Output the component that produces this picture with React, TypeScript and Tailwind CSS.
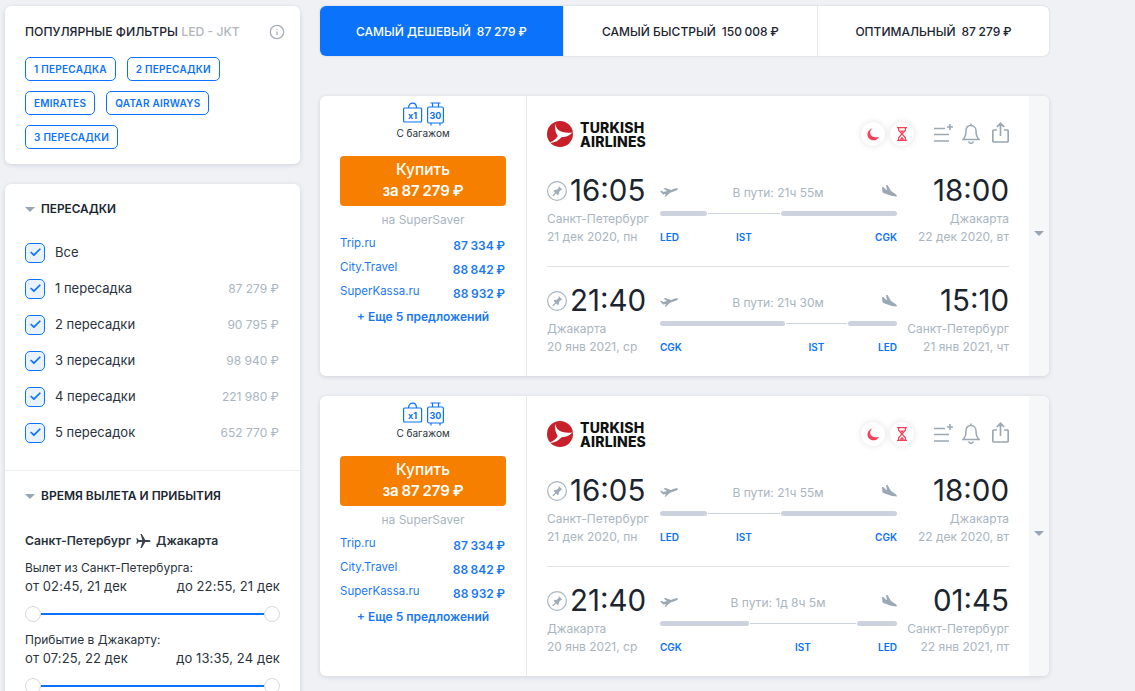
import { Check, Info } from 'lucide-react'

const font = { fontFamily: 'Inter, "Noto Sans", sans-serif' }

const Caret = () => <span className="inline-block w-0 h-0 border-x-[5px] border-x-transparent border-t-[5px] border-t-[#98a5b3]" />

const Pin = () => (
    <svg width="20" height="20" viewBox="0 0 20 20" fill="none" className="shrink-0 mt-[2px]">
        <circle cx="10" cy="10" r="9.400" stroke="#a9b5c0" strokeWidth="1.200" />
        <path d="M11.500 4.800l3.700 3.700-1.200.4-2 2-.2 2.400-1 .9-1.700-1.700-2.700 2.700-.9-.1.1-.8 2.600-2.700-1.700-1.700.9-1 2.400-.2 2-2z" fill="#a0adb9" />
    </svg>
)

const TakeOff = () => (
    <svg width="18" height="11" viewBox="0 0 18 11" fill="#9aa8b4">
        <path d="M0 4L1.500 3.800L3.500 5L7 4L3.500 1.500L5.500 1L11 3L15 1.600C16.500 1.200 18 1.200 18 1.900C18 2.600 16.500 3.400 15 3.900L10 5.800L6 9.500L4.500 10L6 7L3 7.600Z" />
    </svg>
)

const Landing = () => (
    <svg width="16" height="14" viewBox="0 0 16 12" preserveAspectRatio="none" fill="#9aa8b4" className="-mt-[3px]">
        <path d="M1 2.500L2.300 2.500L5 5L6 5.300L5 .8L6.500 .8L10 6L14.500 8.600C15.500 9.200 16 10 15.800 10.800L11 10.200L3 8L1.500 7Z" />
    </svg>
)

const Bag = () => (
    <svg width="41" height="24" viewBox="0 0 41 24" fill="none" stroke="#0b72fb" strokeWidth="1.200">
        <rect x="0.600" y="6" width="18" height="14" rx="1" />
        <path d="M5.500 6c0-6.500 8-6.500 8 0" />
        <text x="9.500" y="16.800" textAnchor="middle" fontSize="9" fontWeight="700" fill="#0b72fb" stroke="none">x1</text>
        <rect x="24.600" y="5" width="15.800" height="16" rx="1.500" />
        <path d="M27.500 1h10M29.500 1v4M35.500 1v4M28 21v2.500M37 21v2.500" />
        <text x="32.500" y="16.500" textAnchor="middle" fontSize="9" fontWeight="700" fill="#0b72fb" stroke="none">30</text>
    </svg>
)

const Logo = () => (
    <div className="flex items-center gap-[7px]">
        <svg width="26" height="26" viewBox="0 0 26 26">
            <circle cx="13" cy="13" r="13" fill="#c8202a" />
            <path d="M8 2.500C9.500 9 13 12.500 25.500 11.500C22 15 18 16.500 15 16C11 20 6.500 22.500 2.500 21.500C6 20.500 9 18 10.700 15C8.500 11.500 7.500 7 8 2.500Z" fill="#fff" />
        </svg>
        <div className="text-[14px] leading-[14px] font-extrabold text-[#111] tracking-[0.2px] pt-[2px]">
            <div>TURKISH</div>
            <div>AIRLINES</div>
        </div>
    </div>
)

const ListAdd = () => (
    <svg width="20" height="18" viewBox="0 0 20 18" fill="none" stroke="#9aa8b4" strokeWidth="1.600" className="-mt-[2px]">
        <path d="M0 4.500h11M0 10.500h15M0 17h15M13 3h6M16 0v6" />
    </svg>
)

const BellIcon = () => (
    <svg width="18" height="21" viewBox="0 0 18 21" fill="none" stroke="#9aa8b4" strokeWidth="1.500" className="-mt-[1px]">
        <path d="M9 .6v2M9 2.600c-3.200 0-5 2.400-5 5.400 0 4-1 6.500-3 8.500h16c-2-2-3-4.500-3-8.500 0-3-1.800-5.400-5-5.400zM6.500 18.500c.5 1.200 1.400 1.800 2.500 1.800s2-.6 2.500-1.800" />
    </svg>
)

const Share = () => (
    <svg width="17" height="21" viewBox="0 0 17 21" fill="none" stroke="#9aa8b4" strokeWidth="1.700" className="-mt-[3px]">
        <path d="M5 8H2a1.200 1.200 0 0 0-1.200 1.200v9.600A1.200 1.200 0 0 0 2 20h13a1.200 1.200 0 0 0 1.200-1.200V9.200A1.200 1.200 0 0 0 15 8h-3M8.500 14V1.500M4.800 5l3.700-3.700L12.200 5" />
    </svg>
)

const Moon = () => (
    <svg width="13" height="13" viewBox="0 0 14 14"><path d="M6 .500C3 2 2.500 7 5.500 9c2 1.300 5 1.300 7.500.4C11.500 12.300 9 13.500 6.800 13.300 3.200 13 .500 10.300.500 6.900.500 4 2.800 1.200 6 .500z" fill="#f5405a" /></svg>
)

const Hourglass = () => (
    <svg width="10" height="14" viewBox="0 0 10 14" fill="none" stroke="#f5405a" strokeWidth="1.200">
        <path d="M0 .600h10M0 13.400h10M1.600.6v2.600L5 7 1.600 10.800v2.600M8.400.6v2.600L5 7l3.400 3.800v2.600" />
        <path d="M2.500 12.800L5 9.800l2.500 3zM3 3.500h4L5 6z" fill="#f5405a" stroke="none" />
    </svg>
)

const Round = ({ children }: { children: React.ReactNode }) => (
    <div className="w-6 h-6 rounded-full bg-white shadow-[0_0_6px_rgba(0,0,0,0.12)] flex items-center justify-center">{children}</div>
)

type Leg = {
    dep: string; arr: string; fromCity: string; toCity: string
    fromDate: string; toDate: string; duration: string; a: number; b: number; codes: string[]
}

const LegRow = ({ leg }: { leg: Leg }) => (
    <div className="flex h-[87px]">
        <div className="w-[113px] shrink-0">
            <div className="flex items-center gap-[3px] h-[38px]">
                <Pin />
                <span className="text-[29.500px] text-[#1b2530]">{leg.dep}</span>
            </div>
            <div className="text-xs leading-[18px] text-[#a9b5c0] mt-px whitespace-nowrap">{leg.fromCity}</div>
            <div className="text-xs leading-[18px] text-[#a9b5c0] whitespace-nowrap">{leg.fromDate}</div>
        </div>
        <div className="w-[237px] shrink-0">
            <div className="flex items-center justify-between h-[37px] pt-[6px]">
                <TakeOff />
                <span className="text-xs text-[#a9b5c0] mr-[3px]">{leg.duration}</span>
                <Landing />
            </div>
            <div className="flex items-center h-[5px] mt-[3px]">
                <div className="h-[5px] rounded-full bg-[#ccd3df]" style={{ width: leg.a }} />
                <div className="h-px flex-1 bg-[#ccd3df] mx-px" />
                <div className="h-[5px] rounded-full bg-[#ccd3df]" style={{ width: leg.b }} />
            </div>
            <div className="flex text-[10px] font-semibold text-[#0b72fb] mt-[15px] leading-3">
                <div style={{ width: leg.a }}>{leg.codes[0]}</div>
                <div className="flex-1 text-center">{leg.codes[1]}</div>
                <div className="text-right" style={{ width: leg.b }}>{leg.codes[2]}</div>
            </div>
        </div>
        <div className="flex-1 text-right">
            <div className="text-[29.500px] text-[#1b2530] h-[38px] leading-[38px]">{leg.arr}</div>
            <div className="text-xs leading-[18px] text-[#a9b5c0] mt-px whitespace-nowrap">{leg.toCity}</div>
            <div className="text-xs leading-[18px] text-[#a9b5c0] whitespace-nowrap">{leg.toDate}</div>
        </div>
    </div>
)

const Offer = ({ name, price }: { name: string; price: string }) => (
    <div className="flex justify-between h-6 items-center">
        <span className="text-[11.500px] -mt-[2px]">{name}</span>
        <span className="font-semibold mt-[2px] mr-px [word-spacing:-0.5px]">{price}</span>
    </div>
)

const Ticket = ({ legs }: { legs: Leg[] }) => (
    <div className="flex h-[280px] bg-white rounded-md shadow-[0_1px_4px_rgba(90,105,125,0.22)] overflow-hidden">
        <div className="w-[207px] shrink-0 border-r border-[#e6e9ee] px-5 flex flex-col">
            <div className="flex justify-center mt-[6px]"><Bag /></div>
            <div className="text-[10px] leading-3 text-[#2a333d] text-center mt-px">С багажом</div>
            <div className="h-[50px] mt-[17px] pb-[2px] rounded bg-[#f77f00] text-white text-center text-[15px] font-medium leading-[21px] flex flex-col justify-center">
                <div className="text-[15.500px]">Купить</div>
                <div className="font-semibold [word-spacing:-1px]">за 87 279 ₽</div>
            </div>
            <div className="text-xs leading-4 text-[#a9b5c0] text-center mt-[6px]">на SuperSaver</div>
            <div className="text-xs text-[#1a78f2] mt-[5px]">
                <Offer name="Trip.ru" price="87 334 ₽" />
                <Offer name="City.Travel" price="88 842 ₽" />
                <Offer name="SuperKassa.ru" price="88 932 ₽" />
            </div>
            <div className="text-xs font-semibold text-[#1a78f2] text-center mt-[4px] leading-4">+ Еще 5 предложений</div>
        </div>
        <div className="flex-1 px-5">
            <div className="flex items-center justify-between mt-[24px] h-[28px]">
                <Logo />
                <div className="flex items-center">
                    <div className="flex gap-[5px] mr-[20px]"><Round><Moon /></Round><Round><Hourglass /></Round></div>
                    <ListAdd />
                    <div className="ml-[8px] flex"><BellIcon /></div>
                    <div className="ml-[12px] flex"><Share /></div>
                </div>
            </div>
            <div className="mt-[23px]">
                <LegRow leg={legs[0]} />
                <div className="h-px bg-[#dfe3e8] mt-[8px] mb-[14px]" />
                <LegRow leg={legs[1]} />
            </div>
        </div>
        <div className="w-5 shrink-0 bg-[#f6f7f9] flex items-center justify-center pb-[6px]"><Caret /></div>
    </div>
)

const Tab = ({ title, price, active, width }: { title: string; price: string; active?: boolean; width: string }) => (
    <div className={`${width} pt-[1px] flex items-center justify-center gap-[6px] text-xs font-medium ${active ? 'bg-[#0b72fb] text-white' : 'text-[#1b2530] border-l border-[#e6e9ee]'}`}>
        <span>{title}</span><span className="[word-spacing:-0.5px]">{price}</span>
    </div>
)

const Chip = ({ label }: { label: string }) => (
    <span className="h-6 px-2 inline-flex items-center border border-[#0b72fb] rounded-[5px] text-[10px] font-semibold tracking-[0.25px] text-[#0b72fb]">{label}</span>
)

const Stop = ({ label, price }: { label: string; price?: string }) => (
    <div className="flex items-center h-9">
        <div className="w-5 h-5 rounded-[5px] border-[1.500px] border-[#0b72fb] bg-[#e9f3ff] flex items-center justify-center">
            <Check size={13} strokeWidth={3.200} className="text-[#0b72fb]" />
        </div>
        <span className="ml-[10px] text-[13px] text-[#2a333d]">{label}</span>
        {price && <span className="ml-auto mr-px text-xs text-[#a9b5c0]">{price}</span>}
    </div>
)

const Range = () => (
    <div className="flex items-center h-4 mt-[11px]">
        <div className="w-4 h-4 rounded-full bg-white border border-[#d5d9de] shrink-0" />
        <div className="flex-1 h-0.5 bg-[#0b72fb]" />
        <div className="w-4 h-4 rounded-full bg-white border border-[#d5d9de] shrink-0" />
    </div>
)

const first: Leg = { dep: '16:05', arr: '18:00', fromCity: 'Санкт-Петербург', toCity: 'Джакарта', fromDate: '21 дек 2020, пн', toDate: '22 дек 2020, вт', duration: 'В пути: 21ч 55м', a: 47, b: 116, codes: ['LED', 'IST', 'CGK'] }
const back1: Leg = { dep: '21:40', arr: '15:10', fromCity: 'Джакарта', toCity: 'Санкт-Петербург', fromDate: '20 янв 2021, ср', toDate: '21 янв 2021, чт', duration: 'В пути: 21ч 30м', a: 125, b: 49, codes: ['CGK', 'IST', 'LED'] }
const back2: Leg = { dep: '21:40', arr: '01:45', fromCity: 'Джакарта', toCity: 'Санкт-Петербург', fromDate: '20 янв 2021, ср', toDate: '22 янв 2021, пт', duration: 'В пути: 1д 8ч 5м', a: 89, b: 40, codes: ['CGK', 'IST', 'LED'] }

export default function App() {
    return (
        <div className="h-[691px] overflow-hidden bg-[#eff1f5] flex items-start" style={font}>
            <aside className="w-[295px] ml-[5px] mt-[6px] shrink-0">
                <div className="h-[158px] bg-white rounded-md shadow-[0_1px_4px_rgba(90,105,125,0.22)] pl-5 pr-[15px] pt-[17px]">
                    <div className="flex items-center justify-between text-[12.200px] font-medium text-[#1b2530] whitespace-nowrap">
                        <div>ПОПУЛЯРНЫЕ ФИЛЬТРЫ <span className="text-[#b0b6bc]">LED - JKT</span></div>
                        <Info size={16} className="text-[#a4afba]" />
                    </div>
                    <div className="flex flex-wrap gap-x-[11px] gap-y-[10px] mt-[16px]">
                        <Chip label="1 ПЕРЕСАДКА" />
                        <Chip label="2 ПЕРЕСАДКИ" />
                        <Chip label="EMIRATES" />
                        <Chip label="QATAR AIRWAYS" />
                        <Chip label="3 ПЕРЕСАДКИ" />
                    </div>
                </div>
                <div className="mt-5 h-[600px] bg-white rounded-md shadow-[0_1px_4px_rgba(90,105,125,0.22)]">
                    <div className="px-5 pt-[17px] h-[287px] border-b border-[#eceef2]">
                        <div className="flex items-center gap-[6px] text-[11.800px] font-semibold text-[#1b2530]"><Caret />ПЕРЕСАДКИ</div>
                        <div className="mt-[16px]">
                            <Stop label="Все" />
                            <Stop label="1 пересадка" price="87 279 ₽" />
                            <Stop label="2 пересадки" price="90 795 ₽" />
                            <Stop label="3 пересадки" price="98 940 ₽" />
                            <Stop label="4 пересадки" price="221 980 ₽" />
                            <Stop label="5 пересадок" price="652 770 ₽" />
                        </div>
                    </div>
                    <div className="px-5 pt-[17px]">
                        <div className="flex items-center gap-[6px] text-xs font-semibold text-[#1b2530]"><Caret />ВРЕМЯ ВЫЛЕТА И ПРИБЫТИЯ</div>
                        <div className="flex items-center gap-[5px] text-[12.200px] font-semibold text-[#2a333d] mt-[28px]">
                            Санкт-Петербург
                            <svg width="15" height="14" viewBox="0 0 15 14" fill="#3a444f"><path d="M14.500 7c0-.700-1-1.100-2-1.100H9.300L5.800 0H4.500L6.300 5.900H2.700L1.300 4.200H.300L1 7 .300 9.800h1l1.400-1.700h3.600L4.500 14h1.300l3.500-5.900h3.200c1 0 2-.4 2-1.100z" /></svg>
                            Джакарта
                        </div>
                        <div className="text-xs leading-[18px] text-[#2a333d] mt-[9px]">Вылет из Санкт-Петербурга:</div>
                        <div className="flex justify-between text-[13px] leading-[18px] tracking-[0.1px] text-[#2a333d]"><span>от 02:45, 21 дек</span><span>до 22:55, 21 дек</span></div>
                        <Range />
                        <div className="text-xs leading-[18px] text-[#2a333d] mt-[9px]">Прибытие в Джакарту:</div>
                        <div className="flex justify-between text-[13px] leading-[18px] tracking-[0.1px] text-[#2a333d]"><span>от 07:25, 22 дек</span><span>до 13:35, 24 дек</span></div>
                        <Range />
                    </div>
                </div>
            </aside>
            <main className="w-[729px] ml-5 mt-[6px] shrink-0">
                <div className="flex h-[50px] bg-white rounded-md overflow-hidden shadow-[0_0_2px_rgba(90,105,125,0.3)]">
                    <Tab active width="w-[243px]" title="САМЫЙ ДЕШЕВЫЙ" price="87 279 ₽" />
                    <Tab width="w-[254px]" title="САМЫЙ БЫСТРЫЙ" price="150 008 ₽" />
                    <Tab width="w-[232px]" title="ОПТИМАЛЬНЫЙ" price="87 279 ₽" />
                </div>
                <div className="mt-10 flex flex-col gap-5">
                    <Ticket legs={[first, back1]} />
                    <Ticket legs={[first, back2]} />
                </div>
            </main>
        </div>
    )
}
